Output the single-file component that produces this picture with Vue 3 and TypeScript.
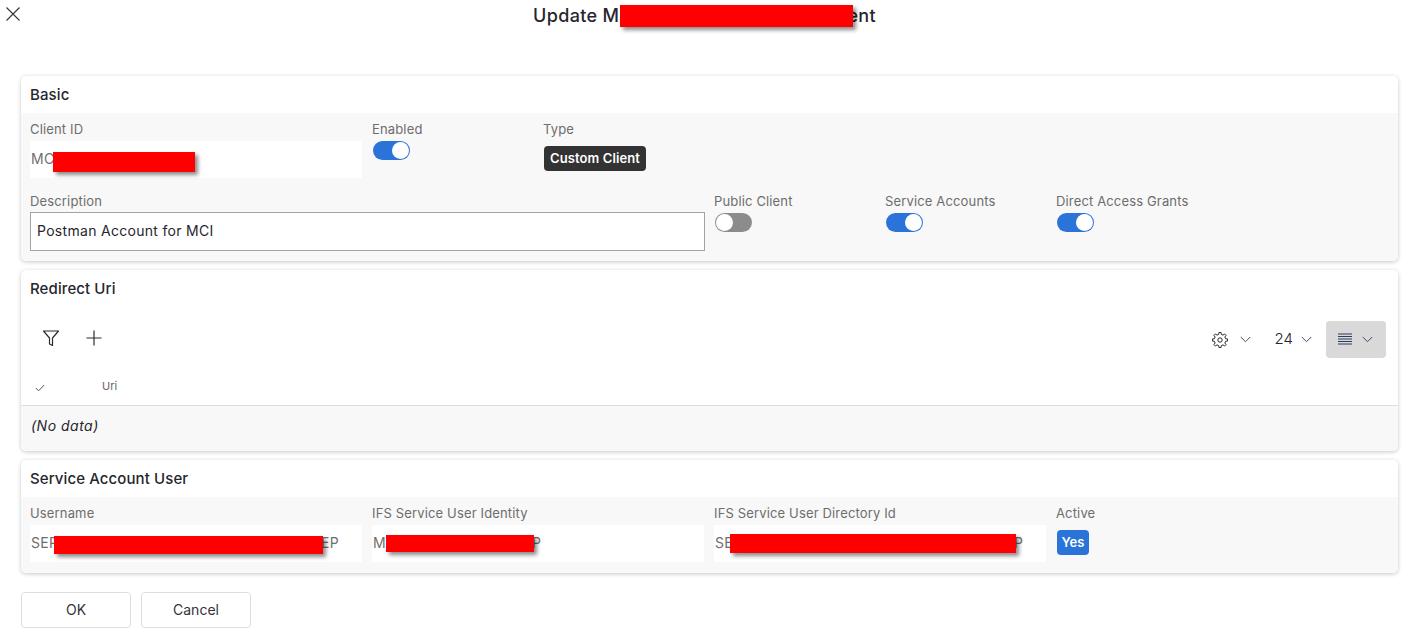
<script setup lang="ts">
interface Toggle { label: string; on: boolean }
const toggles: Toggle[] = [
  { label: 'Public Client', on: false },
  { label: 'Service Accounts', on: true },
  { label: 'Direct Access Grants', on: true },
]

function gearPath(): string {
  const teeth = 8
  const cx = 12
  const cy = 12
  const outer = 11.4
  const inner = 8.6
  const step = (Math.PI * 2) / teeth
  const pts: string[] = []
  for (let i = 0; i < teeth; i++) {
    const a = i * step - Math.PI / 2
    const spots: [number, number][] = [
      [inner, a - step * 0.3],
      [outer, a - step * 0.17],
      [outer, a + step * 0.17],
      [inner, a + step * 0.3],
    ]
    for (const [r, t] of spots) {
      pts.push(`${(cx + r * Math.cos(t)).toFixed(2)} ${(cy + r * Math.sin(t)).toFixed(2)}`)
    }
  }
  return `M${pts.join('L')}Z`
}
const gear = gearPath()
</script>

<template>
  <div class="page">
    <header class="top">
      <svg class="close" width="16" height="16" viewBox="0 0 16 16" fill="none" stroke="#333" stroke-width="1.1">
        <path d="M1.5 1.5 14.5 14.5M14.5 1.5 1.5 14.5" />
      </svg>
      <h1 class="title"><span>Update M</span><span class="title-gap"></span><span>ent</span><span class="red r-title"></span></h1>
    </header>

    <section class="card c-basic">
      <h2 class="card-head">Basic</h2>
      <div class="body grid">
        <div class="field span2">
          <label>Client ID</label>
          <div class="ro">MC<span class="red r-client"></span></div>
        </div>
        <div class="field">
          <label>Enabled</label>
          <span class="toggle on"><i></i></span>
        </div>
        <div class="field">
          <label>Type</label>
          <span class="badge dark">Custom Client</span>
        </div>
        <div class="filler span4"></div>
        <div class="field span4 row2">
          <label>Description</label>
          <div class="input">Postman Account for MCI</div>
        </div>
        <div v-for="t in toggles" :key="t.label" class="field row2">
          <label>{{ t.label }}</label>
          <span class="toggle" :class="{ on: t.on }"><i></i></span>
        </div>
      </div>
    </section>

    <section class="card c-redirect">
      <h2 class="card-head">Redirect Uri</h2>
      <div class="toolbar">
        <div class="tools">
          <svg width="18" height="18" viewBox="0 0 18 18" fill="none" stroke="#2b2b33" stroke-width="1.2" stroke-linejoin="round">
            <path d="M1.5 2h15l-6 7v7.5l-3-1.500V9z" />
          </svg>
          <svg width="18" height="18" viewBox="0 0 18 18" fill="none" stroke="#2b2b33" stroke-width="1.2">
            <path d="M9 1.500v15M1.500 9h15" />
          </svg>
        </div>
        <div class="views">
          <span class="view gearview">
            <svg width="16" height="16" viewBox="0 0 24 24" fill="none" stroke="#2b2b33" stroke-width="1.500" stroke-linejoin="round">
              <circle cx="12" cy="12" r="3.300" />
              <path :d="gear" />
            </svg>
            <svg class="chev" width="11" height="7" viewBox="0 0 11 7" fill="none" stroke="#3f4a63" stroke-width="1"><path d="M.8 1 5.500 5.700 10.200 1" /></svg>
          </span>
          <span class="view count">
            <span class="num">24</span>
            <svg class="chev" width="11" height="7" viewBox="0 0 11 7" fill="none" stroke="#3f4a63" stroke-width="1"><path d="M.8 1 5.500 5.700 10.200 1" /></svg>
          </span>
          <span class="density">
            <svg width="14" height="13" viewBox="0 0 14 13" fill="none" stroke="#2e3a5f" stroke-width="1"><path d="M0 1h14M0 3.500h14M0 6h14M0 8.500h14M0 11h14" /></svg>
            <svg class="chev" width="11" height="7" viewBox="0 0 11 7" fill="none" stroke="#3f4a63" stroke-width="1"><path d="M.8 1 5.500 5.700 10.200 1" /></svg>
          </span>
        </div>
      </div>
      <div class="thead">
        <svg class="check" width="10" height="8" viewBox="0 0 10 8" fill="none" stroke="#555" stroke-width="1"><path d="M.8 4 3.600 6.800 9.200 1" /></svg>
        <span class="th">Uri</span>
      </div>
      <div class="nodata">(No data)</div>
    </section>

    <section class="card c-user">
      <h2 class="card-head">Service Account User</h2>
      <div class="body grid">
        <div class="field span2">
          <label>Username</label>
          <div class="ro">SEP<span class="end">EP</span><span class="red r-user"></span></div>
        </div>
        <div class="field span2">
          <label>IFS Service User Identity</label>
          <div class="ro">M<span class="end e2">P</span><span class="red r-ident"></span></div>
        </div>
        <div class="field span2">
          <label>IFS Service User Directory Id</label>
          <div class="ro">SE<span class="end e3">P</span><span class="red r-dir"></span></div>
        </div>
        <div class="field">
          <label>Active</label>
          <span class="badge blue">Yes</span>
        </div>
      </div>
    </section>

    <footer class="actions">
      <button type="button">OK</button>
      <button type="button">Cancel</button>
    </footer>
  </div>
</template>

<style>
html, body { background: #fff; }
</style>

<style scoped>
.page {
  width: 1403px;
  height: 640px;
  box-sizing: border-box;
  padding: 0 5px 0 21px;
  font-family: Inter, "Open Sans", sans-serif;
  color: #26262c;
  overflow: hidden;
}
.top {
  height: 76px;
  margin: 0 -5px 0 -21px;
  position: relative;
  display: flex;
  justify-content: center;
}
.close { position: absolute; left: 5px; top: 6px; }
.title {
  margin: 5px 0 0;
  padding-left: 6px;
  width: 343px;
  height: 22px;
  font-size: 18px;
  line-height: 22px;
  font-weight: 500;
  letter-spacing: .35px;
  position: relative;
  white-space: nowrap;
  display: flex;
}
.title-gap { flex: 1; }
.card {
  width: 1377px;
  margin-bottom: 9px;
  background: #fff;
  border-radius: 5px;
  box-shadow: 0 1px 4px rgba(0, 0, 0, .22);
  overflow: hidden;
}
.card-head {
  margin: 0;
  height: 37px;
  padding-left: 9px;
  font-size: 15px;
  line-height: 37px;
  font-weight: 500;
  letter-spacing: .1px;
}
.body { background: #f8f8f8; padding: 8px 9px 0; box-sizing: border-box; }
.c-basic .body { height: 148px; }
.c-user .body { height: 76px; }
.grid {
  display: grid;
  grid-template-columns: repeat(8, 161px);
  column-gap: 10px;
  align-content: start;
}
.span2 { grid-column: span 2; }
.span4 { grid-column: span 4; }
.row2 { margin-top: 15px; }
.filler { height: 0; }
.field { display: flex; flex-direction: column; align-items: flex-start; min-width: 0; }
label {
  display: block;
  font-size: 13px;
  line-height: 16px;
  letter-spacing: .15px;
  color: #6d6d6d;
  margin-bottom: 4px;
  white-space: nowrap;
}
.ro {
  position: relative;
  width: 100%;
  height: 37px;
  background: #fff;
  font-size: 14px;
  line-height: 36px;
  letter-spacing: .3px;
  color: #6f6f6f;
  padding-left: 1px;
  box-sizing: border-box;
}
.c-user .ro { line-height: 35px; }
.input {
  width: calc(100% + 1px);
  height: 39px;
  margin-top: -1px;
  box-sizing: border-box;
  border: 1px solid #a3a3a3;
  background: #fff;
  font-size: 14px;
  line-height: 36px;
  letter-spacing: .3px;
  padding-left: 6px;
  color: #26262c;
}
.toggle {
  position: relative;
  width: 37px;
  height: 19px;
  margin-left: 1px;
  border-radius: 10px;
  background: #8c8c8c;
  display: block;
}
.toggle i {
  position: absolute;
  left: 1px;
  top: 1px;
  width: 17px;
  height: 17px;
  border-radius: 50%;
  background: #fff;
}
.toggle.on { background: #2a73d9; }
.toggle.on i { left: 19px; }
.badge {
  display: inline-block;
  border-radius: 4px;
  color: #fff;
  font-size: 13px;
  font-weight: 600;
  height: 25px;
  line-height: 24px;
  margin-left: 1px;
  margin-top: 5px;
  padding: 0;
  box-sizing: border-box;
  text-align: center;
  white-space: nowrap;
}
.dark { background: #333; width: 102px; letter-spacing: .1px; }
.blue { background: #2a73d9; width: 32px; }
.toolbar {
  height: 62px;
  box-sizing: border-box;
  display: flex;
  align-items: flex-start;
  justify-content: space-between;
  padding: 14px 12px 0 21px;
}
.tools { display: flex; gap: 25px; padding-top: 8px; }
.views { display: flex; align-items: flex-start; }
.view {
  display: flex;
  align-items: center;
  height: 37px;
}
.view .chev { margin-left: 12px; }
.gearview { margin-right: 24px; }
.count { margin-right: 14px; font-size: 15px; font-weight: 300; }
.num { line-height: 16px; margin-top: -2px; }
.count .chev { margin-left: 8px; }
.density {
  width: 60px;
  height: 37px;
  background: #d9d9d9;
  border-radius: 4px;
  display: flex;
  align-items: center;
  padding-left: 12px;
  box-sizing: border-box;
}
.density .chev { margin-left: 10px; }
.thead {
  height: 37px;
  box-sizing: border-box;
  border-bottom: 1px solid #dedede;
  display: flex;
  align-items: flex-start;
  padding-left: 14px;
}
.check { margin-top: 15px; }
.th {
  margin-left: 57px;
  margin-top: 10px;
  font-size: 11px;
  line-height: 14px;
  color: #666;
}
.nodata {
  height: 45px;
  background: #f8f8f8;
  padding-left: 10px;
  font-size: 14px;
  font-style: italic;
  line-height: 39px;
  letter-spacing: .5px;
}
.actions { display: flex; gap: 10px; margin-top: 19px; }
button {
  width: 110px;
  height: 36px;
  background: #fff;
  border: 1px solid #dedede;
  border-radius: 4px;
  font: inherit;
  font-size: 14px;
  color: #33333a;
  padding: 0 0 2px;
}
.red {
  position: absolute;
  background: #ff0000;
  box-shadow: 3px 3px 4px rgba(0, 0, 0, .45);
}
.r-title { left: 93px; top: 0; width: 233px; height: 22px; }
.r-client { left: 23px; top: 11px; width: 142px; height: 20px; }
.r-user { left: 24px; top: 11px; width: 269px; height: 18px; }
.r-ident { left: 14px; top: 10px; width: 148px; height: 17px; }
.r-dir { left: 16px; top: 9px; width: 286px; height: 19px; }
.end { position: absolute; left: 291px; top: 0; }
.e2 { left: 160px; }
.e3 { left: 300px; }
</style>
